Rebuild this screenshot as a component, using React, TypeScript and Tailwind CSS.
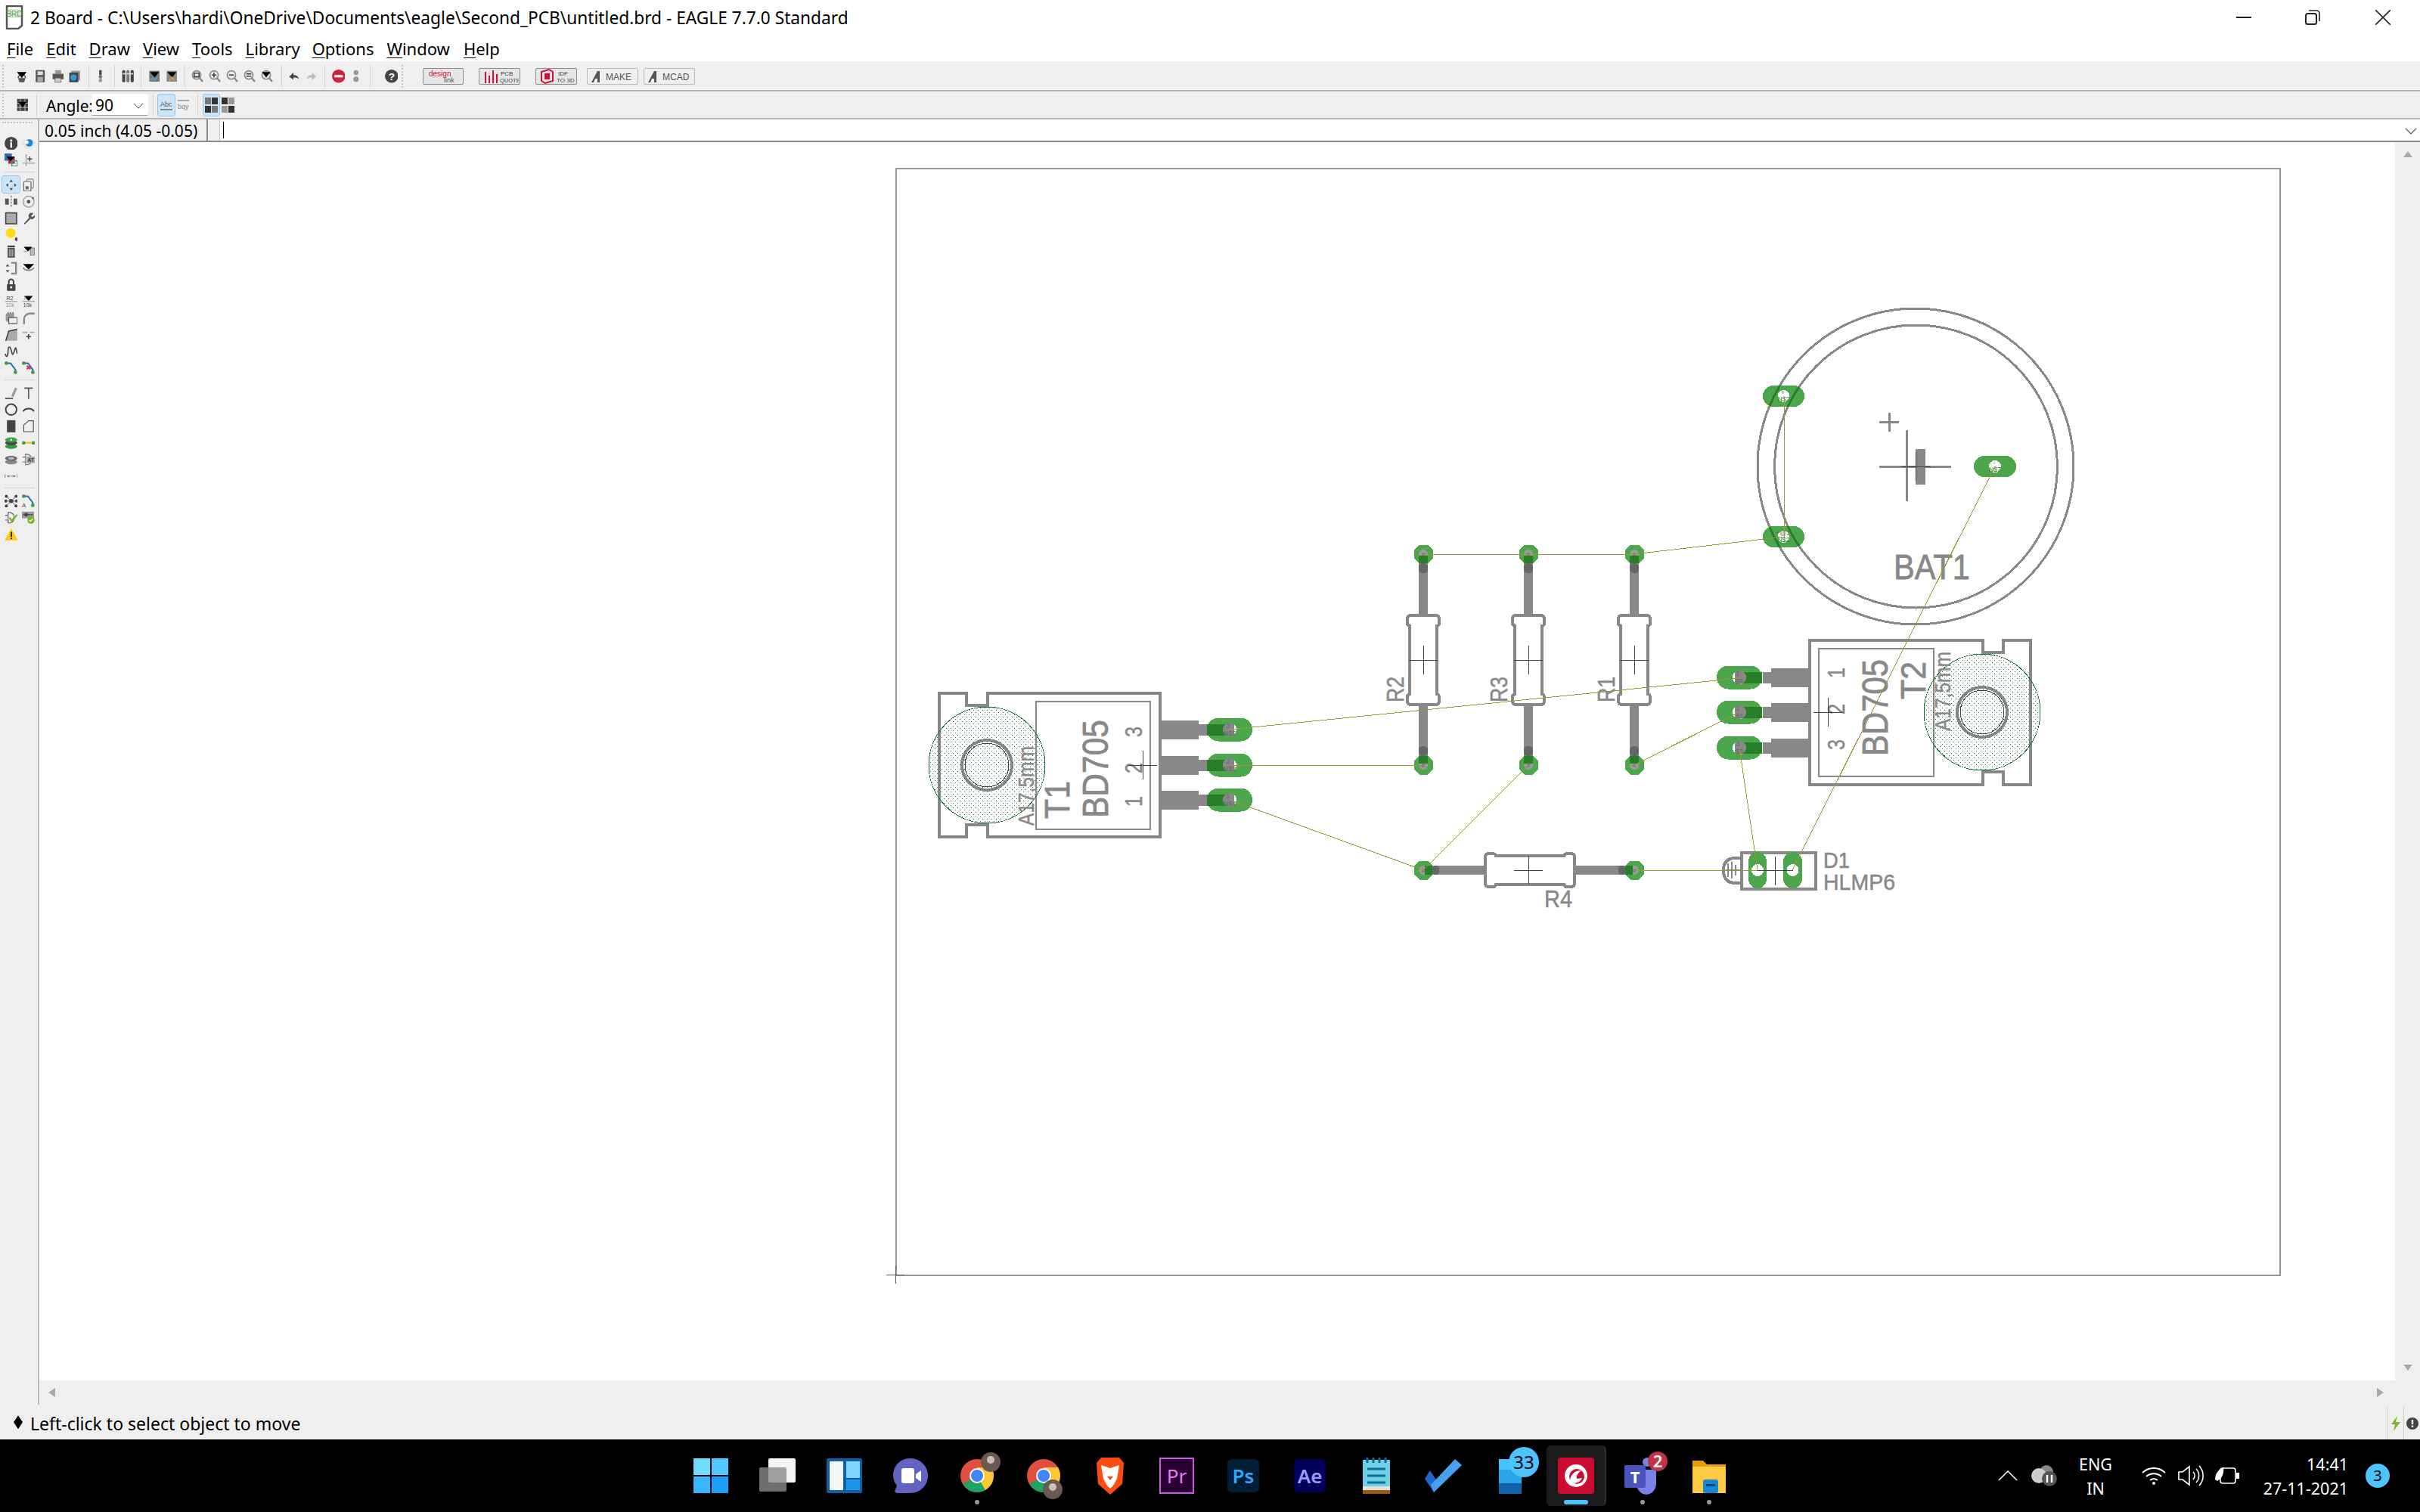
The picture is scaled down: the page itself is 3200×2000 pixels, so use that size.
import type { ReactNode } from "react";

const G = "#888888";
const WIRE = "#999933";
const PAD = "#4ca64c";
const OVER = "#278027";
const DARK = "#404040";

// ---------- small icon helpers ----------

function Ico({ w = 22, h = 22, children }: { w?: number; h?: number; children: ReactNode }) {
  return (
    <svg width={w * 0.8} height={h * 0.8} viewBox={`0 0 ${w} ${h}`} className="block">
      {children}
    </svg>
  );
}

const Drop = ({ x = 4, y = 6 }: { x?: number; y?: number }) => <path d={`M${x} ${y}h14l-7 8z`} fill="#000" />;

function Sep() {
  return <div className="h-[30px] w-px bg-[#d4d4d4]" />;
}

function Grip() {
  return <div className="h-[30px] w-[4px] border-l-2 border-dotted border-[#c4c4c4]" />;
}

function Magnify({ sign }: { sign: string }) {
  return (
    <Ico>
      <circle cx="10" cy="9" r="7" fill="#e8e8e8" stroke="#8a8a8a" strokeWidth="2" />
      <path d="M15 14l5 6" stroke="#8a8a8a" strokeWidth="3" />
      <path d={sign} stroke="#444" strokeWidth="2" fill="none" />
    </Ico>
  );
}

function ToolBtn({ className, children }: { className: string; children: ReactNode }) {
  return (
    <div className={`flex h-[22px] items-center justify-center rounded-[2px] border border-[#8a8a8a] bg-[#e6e6e6] ${className}`}>
      {children}
    </div>
  );
}

// ---------- top toolbars ----------

function MainToolbar() {
  return (
    <div className="flex h-[37px] items-center bg-[#efefef]">
      <div className="ml-[3px] w-[7px]"><Grip /></div>
      <div className="ml-[7px] flex w-[24px] justify-center">
        <Ico>
          <path d="M5 14h12l-2 7H7z" fill="#555" />
          <path d="M5 14a6 6 0 0 1 12 0" fill="none" stroke="#555" strokeWidth="2" />
          <path d="M3 4h16l-8 10z" fill="#000" />
        </Ico>
      </div>
      <div className="flex w-[24px] justify-center">
        <Ico>
          <rect x="4" y="1" width="15" height="20" rx="1" fill="#555" />
          <rect x="7" y="3" width="9" height="6" fill="#ddd" />
          <rect x="7" y="12" width="9" height="8" fill="#aaa" />
        </Ico>
      </div>
      <div className="flex w-[23px] justify-center">
        <Ico>
          <rect x="6" y="1" width="10" height="6" fill="#999" />
          <rect x="2" y="7" width="18" height="9" fill="#555" />
          <rect x="6" y="14" width="10" height="7" fill="#ccc" stroke="#666" />
        </Ico>
      </div>
      <div className="flex w-[22px] justify-center">
        <Ico>
          <rect x="5" y="2" width="15" height="16" fill="#999" />
          <rect x="2" y="5" width="15" height="16" fill="#444" />
          <circle cx="9" cy="13" r="5" fill="#2f9be0" />
        </Ico>
      </div>
      <div className="ml-[7px]"><Sep /></div>
      <div className="ml-[4px] flex w-[22px] justify-center">
        <Ico>
          <path d="M11 1v8" stroke="#444" strokeWidth="4" />
          <circle cx="11" cy="12" r="3" fill="#777" />
          <circle cx="11" cy="18" r="3" fill="#999" />
        </Ico>
      </div>
      <div className="ml-[7px]"><Sep /></div>
      <div className="ml-[6px] flex w-[22px] justify-center">
        <Ico>
          <rect x="2" y="1" width="5" height="20" rx="2" fill="#444" />
          <rect x="9" y="1" width="5" height="20" rx="2" fill="#777" />
          <rect x="16" y="1" width="5" height="20" rx="2" fill="#444" />
          <rect x="3" y="6" width="17" height="2" fill="#ddd" />
        </Ico>
      </div>
      <div className="ml-[6px]"><Sep /></div>
      <div className="ml-[5px] flex w-[23px] justify-center">
        <Ico>
          <rect x="3" y="2" width="17" height="18" fill="#777" />
          <path d="M4 4h15l-7 9z" fill="#000" />
          <path d="M5 18l4-4 3 3 4-4" stroke="#4da3dd" strokeWidth="2" fill="none" />
        </Ico>
      </div>
      <div className="flex w-[23px] justify-center">
        <Ico>
          <rect x="3" y="2" width="17" height="18" fill="#8a8a8a" />
          <path d="M4 4h15l-7 9z" fill="#000" />
          <path d="M7 19l5-6 4 5" stroke="#e09a2f" strokeWidth="2" fill="none" />
        </Ico>
      </div>
      <div className="ml-[6px]"><Sep /></div>
      <div className="ml-[4px] flex w-[23px] justify-center"><Magnify sign="M6 6h8v6H6z" /></div>
      <div className="flex w-[23px] justify-center"><Magnify sign="M6 9h8M10 5v8" /></div>
      <div className="flex w-[23px] justify-center"><Magnify sign="M6 9h8" /></div>
      <div className="flex w-[23px] justify-center"><Magnify sign="M6 7h8M6 11h8" /></div>
      <div className="flex w-[23px] justify-center">
        <Ico>
          <circle cx="10" cy="9" r="7" fill="#e8e8e8" stroke="#8a8a8a" strokeWidth="2" />
          <path d="M15 14l5 6" stroke="#8a8a8a" strokeWidth="3" />
          <path d="M3 4h14l-7 9z" fill="#000" />
        </Ico>
      </div>
      <div className="ml-[8px]"><Sep /></div>
      <div className="ml-[4px] flex w-[23px] justify-center">
        <Ico>
          <path d="M3 12l7-7v4c5 0 8 2 9 7-3-3-5-3-9-3v4z" fill="#444" />
        </Ico>
      </div>
      <div className="flex w-[24px] justify-center">
        <Ico>
          <path d="M19 12l-7-7v4c-5 0-8 2-9 7 3-3 5-3 9-3v4z" fill="#bdbdbd" />
        </Ico>
      </div>
      <div className="ml-[5px]"><Sep /></div>
      <div className="ml-[6px] flex w-[23px] justify-center">
        <Ico>
          <circle cx="11" cy="11" r="11" fill="#d21f3c" />
          <rect x="4" y="9" width="14" height="4" fill="#fff" />
        </Ico>
      </div>
      <div className="flex w-[23px] justify-center">
        <Ico>
          <circle cx="11" cy="5" r="4" fill="#999" />
          <circle cx="11" cy="16" r="4.5" fill="#999" />
        </Ico>
      </div>
      <div className="ml-[7px]"><Sep /></div>
      <div className="ml-[16px] flex w-[23px] justify-center">
        <Ico>
          <circle cx="11" cy="11" r="11" fill="#444" />
          <text x="11" y="17" textAnchor="middle" fontSize="17" fontWeight="700" fill="#fff" fontFamily="'Liberation Sans', sans-serif">?</text>
        </Ico>
      </div>
      <div className="ml-[2px] w-[5px]"><Grip /></div>
      <ToolBtn className="ml-[23px] w-[54px]">
        <svg width="50" height="20" viewBox="0 0 50 20">
          <text x="6" y="10" fontSize="10" fill="#d0103a" fontFamily="'Liberation Sans', sans-serif">design</text>
          <text x="26" y="18" fontSize="9" fill="#555" fontFamily="'Liberation Sans', sans-serif">link</text>
        </svg>
      </ToolBtn>
      <ToolBtn className="ml-[20px] w-[55px]">
        <svg width="50" height="20" viewBox="0 0 50 20">
          <path d="M6 19V4M11 19V9M16 19V2M21 19V7" stroke="#d0103a" strokeWidth="2" />
          <text x="26" y="9" fontSize="8" fill="#444" fontFamily="'Liberation Sans', sans-serif">PCB</text>
          <text x="25" y="18" fontSize="7.5" fill="#444" fontFamily="'Liberation Sans', sans-serif">QUOTE</text>
        </svg>
      </ToolBtn>
      <ToolBtn className="ml-[20px] w-[55px]">
        <svg width="50" height="20" viewBox="0 0 50 20">
          <path d="M5 4l10-3 5 3v12l-10 3-5-3z" fill="none" stroke="#d0103a" strokeWidth="2" />
          <rect x="9" y="6" width="7" height="8" fill="#d0103a" />
          <text x="27" y="9" fontSize="8" fill="#444" fontFamily="'Liberation Sans', sans-serif">IDF</text>
          <text x="25" y="18" fontSize="8" fill="#444" fontFamily="'Liberation Sans', sans-serif">TO 3D</text>
        </svg>
      </ToolBtn>
      <ToolBtn className="ml-[13px] w-[68px] border-[#bcbcbc] bg-[#efefef]">
        <svg width="60" height="20" viewBox="0 0 60 20">
          <path d="M2 18L10 3h3v15h-3v-5H7l-2 5z" fill="#555" />
          <text x="21" y="15" fontSize="12" fill="#555" fontFamily="'Liberation Sans', sans-serif">MAKE</text>
        </svg>
      </ToolBtn>
      <ToolBtn className="ml-[7px] w-[68px] border-[#bcbcbc] bg-[#efefef]">
        <svg width="60" height="20" viewBox="0 0 60 20">
          <path d="M2 18L10 3h3v15h-3v-5H7l-2 5z" fill="#555" />
          <text x="21" y="15" fontSize="12" fill="#555" fontFamily="'Liberation Sans', sans-serif">MCAD</text>
        </svg>
      </ToolBtn>
    </div>
  );
}

function AngleToolbar() {
  return (
    <div className="flex h-[35px] items-center bg-[#efefef]">
      <div className="ml-[3px] w-[7px]"><Grip /></div>
      <div className="ml-[9px] flex w-[22px] justify-center">
        <Ico>
          <rect x="2" y="1" width="18" height="20" fill="#444" />
          <path d="M7 1v20M15 1v20M2 8h18M2 15h18" stroke="#ddd" strokeWidth="1" />
          <path d="M4 6h14l-7 9z" fill="#000" />
        </Ico>
      </div>
      <div className="ml-[7px]"><Sep /></div>
      <span className="ml-[12px] w-[60px] pt-[3px] text-[21px] leading-none text-black">Angle:</span>
      <div className="flex h-[29px] w-[75px] items-center justify-between rounded-[2px] border-b border-[#9a9a9a] bg-white pl-[5px] pr-[6px] pt-[3px] text-[21px] leading-none text-black">
        <span>90</span>
        <svg width="14" height="10" viewBox="0 0 14 10"><path d="M1 2l6 6 6-6" stroke="#444" strokeWidth="1" fill="none" /></svg>
      </div>
      <div className="ml-[6px]"><Sep /></div>
      <div className="ml-[5px] flex h-[30px] w-[24px] items-center justify-center rounded-[3px] border border-[#90c8f6] bg-[#cce4f7]">
        <svg width="18" height="22" viewBox="0 0 18 22">
          <text x="1" y="13" fontSize="9" fill="#555" fontFamily="'Liberation Sans', sans-serif">Abc</text>
          <path d="M1 17h16" stroke="#888" strokeWidth="2" />
        </svg>
      </div>
      <div className="ml-[3px] flex w-[15px] justify-center">
        <svg width="15" height="22" viewBox="0 0 15 22">
          <path d="M0 5h15" stroke="#aaa" strokeWidth="2" />
          <text x="0" y="16" fontSize="9" fill="#888" fontFamily="'Liberation Sans', sans-serif">bqy</text>
        </svg>
      </div>
      <div className="ml-[11px]"><Sep /></div>
      <div className="ml-[6px] flex h-[30px] w-[23px] items-center justify-center rounded-[3px] border border-[#90c8f6] bg-[#cce4f7]">
        <svg width="19" height="22" viewBox="0 0 19 22">
          <rect x="1" y="1" width="8" height="9" fill="#777" />
          <rect x="10" y="1" width="8" height="9" fill="#333" />
          <rect x="1" y="12" width="8" height="9" fill="#333" />
          <rect x="10" y="12" width="8" height="9" fill="#777" />
        </svg>
      </div>
      <div className="ml-[1px] flex w-[19px] justify-center">
        <svg width="19" height="22" viewBox="0 0 19 22">
          <rect x="1" y="1" width="8" height="9" fill="#333" />
          <rect x="10" y="1" width="8" height="9" fill="#999" />
          <rect x="1" y="12" width="8" height="9" fill="#999" />
          <rect x="10" y="12" width="8" height="9" fill="#333" />
        </svg>
      </div>
    </div>
  );
}

// ---------- left tool palette ----------

function Cell({ active, children }: { active?: boolean; children?: ReactNode }) {
  return (
    <div className={`flex h-[22px] w-[23px] items-center justify-center rounded-[2px] ${active ? "bg-[#cce4f7] outline outline-[#90c8f6]" : ""}`}>
      {children}
    </div>
  );
}

const RouteIcon = ({ extra }: { extra?: ReactNode }) => (
  <Ico>
    <path d="M3 3h7l8 11v4" stroke="#2a6fb5" strokeWidth="2.5" fill="none" />
    <circle cx="3" cy="3" r="3" fill="#3aa040" />
    <circle cx="18" cy="18" r="3" fill="#3aa040" />
    {extra}
  </Ico>
);

const SmallLabel = ({ drop }: { drop?: boolean }) => (
  <Ico>
    <text x="3" y="9" fontSize="9" fill={drop ? "#999" : "#444"} fontFamily="'Liberation Sans', sans-serif">R2</text>
    <path d="M1 11h20" stroke="#777" />
    <text x="2" y="20" fontSize="9" fill={drop ? "#444" : "#999"} fontFamily="'Liberation Sans', sans-serif">10k</text>
    {drop && <Drop x={4} y={2} />}
  </Ico>
);

function LeftPalette() {
  return (
    <div className="flex w-[52px] shrink-0 flex-col border-r-2 border-[#bdbdbd] bg-[#efefef] pl-[3px]">
      <div className="mb-[15px] mt-[3px] h-[2px] w-[40px] border-t-2 border-dotted border-[#c4c4c4]" />
      <div className="grid w-[46px] grid-cols-2">
        <Cell>
          <Ico>
            <circle cx="11" cy="11" r="11" fill="#444" />
            <rect x="9.5" y="9" width="3" height="9" fill="#fff" />
            <circle cx="11" cy="6" r="2" fill="#fff" />
          </Ico>
        </Cell>
        <Cell>
          <Ico>
            <ellipse cx="11" cy="11" rx="11" ry="8" fill="#e4e4e4" />
            <circle cx="12" cy="10" r="6" fill="#1e88d8" />
            <circle cx="8" cy="9" r="3" fill="#fff" />
          </Ico>
        </Cell>
        <Cell>
          <Ico>
            <rect x="0" y="0" width="12" height="12" fill="#2a6fb5" />
            <rect x="6" y="6" width="11" height="11" fill="#c8265c" />
            <rect x="12" y="12" width="9" height="9" fill="none" stroke="#36a56a" strokeWidth="2" />
            <path d="M3 5h14l-7 8z" fill="#000" />
          </Ico>
        </Cell>
        <Cell>
          <Ico>
            <path d="M1 16h20M7 1v20" stroke="#aaa" strokeWidth="2" />
            <path d="M9 9h8M13 5v8" stroke="#555" strokeWidth="2" />
          </Ico>
        </Cell>
      </div>
      <div className="mx-[3px] my-[5px] h-px w-[40px] bg-[#d4d4d4]" />
      <div className="grid w-[46px] grid-cols-2">
        <Cell active>
          <Ico>
            <path d="M11 2l3 4H8zM11 20l3-4H8zM2 11l4 3V8zM20 11l-4 3V8z" fill="#555" />
          </Ico>
        </Cell>
        <Cell>
          <Ico>
            <rect x="8" y="1" width="11" height="15" rx="2" fill="#efefef" stroke="#888" strokeWidth="1.5" />
            <rect x="3" y="5" width="12" height="16" rx="2" fill="#efefef" stroke="#666" strokeWidth="1.5" />
            <rect x="6" y="13" width="5" height="5" fill="#666" />
          </Ico>
        </Cell>
        <Cell>
          <Ico>
            <path d="M11 1v20" stroke="#888" strokeDasharray="3 2" strokeWidth="2" />
            <path d="M1 6h6v10H1zM15 6h6v10h-6z" fill="#555" />
          </Ico>
        </Cell>
        <Cell>
          <Ico>
            <circle cx="11" cy="11" r="9" fill="none" stroke="#aaa" strokeWidth="2" />
            <circle cx="11" cy="11" r="3" fill="#555" />
            <path d="M16 3l4 1-1 4z" fill="#555" />
          </Ico>
        </Cell>
        <Cell>
          <Ico>
            <rect x="2" y="2" width="18" height="18" fill="#aaa" stroke="#444" strokeWidth="2" />
          </Ico>
        </Cell>
        <Cell>
          <Ico>
            <path d="M3 20l9-10a5 5 0 0 1 7-7l-4 4 2 2 4-3a5 5 0 0 1-7 6L5 21z" fill="#555" />
          </Ico>
        </Cell>
        <Cell>
          <Ico>
            <circle cx="10" cy="8" r="8" fill="#ffd91a" />
            <circle cx="20" cy="18" r="3" fill="#444" />
          </Ico>
        </Cell>
        <Cell />
        <Cell>
          <Ico>
            <rect x="5" y="1" width="12" height="3" fill="#444" />
            <path d="M5 5h12v16H5z" fill="#555" />
            <path d="M8.5 7v12M11 7v12M13.5 7v12" stroke="#ddd" />
          </Ico>
        </Cell>
        <Cell>
          <Ico>
            <path d="M3 11h5M14 5v12h7V5z" fill="#bbb" stroke="#666" />
            <Drop x={3} y={3} />
          </Ico>
        </Cell>
        <Cell>
          <Ico>
            <path d="M5 4l3 4H2zM5 18l3-4H2z" fill="#555" />
            <path d="M11 2h8v18h-8" fill="none" stroke="#888" strokeWidth="3" />
          </Ico>
        </Cell>
        <Cell>
          <Ico>
            <path d="M2 10a10 8 0 0 0 18 0" fill="none" stroke="#888" strokeWidth="2" />
            <path d="M2 4h18l-9 9z" fill="#000" />
          </Ico>
        </Cell>
        <Cell>
          <Ico>
            <path d="M7 10V6a4 4 0 0 1 8 0v4" fill="none" stroke="#444" strokeWidth="2.5" />
            <rect x="4" y="10" width="14" height="11" rx="1" fill="#444" />
            <circle cx="11" cy="15" r="2" fill="#efefef" />
          </Ico>
        </Cell>
        <Cell />
        <Cell><SmallLabel /></Cell>
        <Cell><SmallLabel drop /></Cell>
        <Cell>
          <Ico>
            <rect x="2" y="3" width="14" height="14" rx="2" fill="#999" />
            <path d="M6 1v3M10 1v3M14 1v3" stroke="#777" strokeWidth="2" />
            <rect x="7" y="10" width="14" height="10" fill="#efefef" stroke="#555" strokeWidth="1.5" />
          </Ico>
        </Cell>
        <Cell>
          <Ico>
            <path d="M2 21v-8a11 11 0 0 1 11-11h8v3h-8a8 8 0 0 0-8 8v8z" fill="#888" />
          </Ico>
        </Cell>
        <Cell>
          <Ico>
            <path d="M2 21L7 5l14-3v19z" fill="#aaa" />
            <path d="M2 21L7 5l14-3" fill="none" stroke="#444" strokeWidth="2" />
          </Ico>
        </Cell>
        <Cell>
          <Ico>
            <path d="M1 7h8M13 7h8" stroke="#aaa" strokeWidth="2" />
            <path d="M7 14h8M11 10v8" stroke="#444" strokeWidth="2" />
          </Ico>
        </Cell>
        <Cell>
          <Ico>
            <path d="M1 15c3 10 5 0 5-6s3-8 5 0 2 10 5 2 2-9 5 4" fill="none" stroke="#444" strokeWidth="2" />
          </Ico>
        </Cell>
        <Cell />
        <Cell><RouteIcon /></Cell>
        <Cell>
          <RouteIcon extra={<path d="M8 7l6 6M14 7l-6 6" stroke="#e0245e" strokeWidth="2.5" />} />
        </Cell>
      </div>
      <div className="mx-[3px] my-[5px] h-px w-[40px] bg-[#d4d4d4]" />
      <div className="grid w-[46px] grid-cols-2">
        <Cell>
          <Ico>
            <path d="M1 20h13" stroke="#444" strokeWidth="2" />
            <path d="M13 17l6-14" stroke="#999" strokeWidth="4" />
          </Ico>
        </Cell>
        <Cell>
          <Ico>
            <path d="M4 3h14M11 3v18" stroke="#555" strokeWidth="2" />
          </Ico>
        </Cell>
        <Cell>
          <Ico><circle cx="11" cy="11" r="9" fill="none" stroke="#444" strokeWidth="2.5" /></Ico>
        </Cell>
        <Cell>
          <Ico><path d="M2 14a10 8 0 0 1 18 0" fill="none" stroke="#444" strokeWidth="2.5" /></Ico>
        </Cell>
        <Cell>
          <Ico><rect x="4" y="1" width="14" height="20" fill="#444" /></Ico>
        </Cell>
        <Cell>
          <Ico><path d="M3 20V9l8-7h8v18z" fill="#efefef" stroke="#555" strokeWidth="1.5" /></Ico>
        </Cell>
        <Cell>
          <Ico>
            <ellipse cx="11" cy="17" rx="10" ry="4" fill="#2f9d3a" />
            <ellipse cx="11" cy="11" rx="10" ry="4" fill="#4a4a4a" />
            <ellipse cx="11" cy="6" rx="10" ry="4" fill="#39a845" />
            <circle cx="11" cy="6" r="1.5" fill="#fff" />
          </Ico>
        </Cell>
        <Cell>
          <Ico>
            <path d="M3 11h16" stroke="#f2c811" strokeWidth="3" />
            <circle cx="3" cy="11" r="3" fill="#3aa040" />
            <circle cx="19" cy="11" r="3" fill="#3aa040" />
          </Ico>
        </Cell>
        <Cell>
          <Ico>
            <ellipse cx="11" cy="15" rx="10" ry="4" fill="#888" />
            <ellipse cx="11" cy="9" rx="10" ry="4" fill="#666" />
            <ellipse cx="11" cy="9" rx="5" ry="2" fill="#bbb" />
          </Ico>
        </Cell>
        <Cell>
          <Ico>
            <path d="M1 7h5M1 15h5M6 2c7 0 10 4 10 9s-3 9-10 9z" fill="none" stroke="#777" strokeWidth="1.5" />
            <rect x="8" y="6" width="14" height="11" fill="#aaa" />
            <text x="9" y="15" fontSize="9" fontWeight="700" fill="#444" fontFamily="'Liberation Sans', sans-serif">AT</text>
          </Ico>
        </Cell>
        <Cell>
          <Ico>
            <path d="M1 8v6M21 8v6M4 11h14" stroke="#666" strokeWidth="1" />
            <path d="M4 11l3-2v4zM18 11l-3-2v4z" fill="#666" />
          </Ico>
        </Cell>
        <Cell />
      </div>
      <div className="mx-[3px] my-[5px] h-px w-[40px] bg-[#d4d4d4]" />
      <div className="grid w-[46px] grid-cols-2">
        <Cell>
          <Ico>
            <path d="M3 3l16 16M19 3L3 19M2 11h18" stroke="#444" strokeWidth="1" />
            <circle cx="11" cy="11" r="3.5" fill="#444" />
            <circle cx="3" cy="3" r="2.5" fill="#444" />
            <circle cx="19" cy="3" r="2.5" fill="#444" />
            <circle cx="3" cy="19" r="2.5" fill="#444" />
            <circle cx="19" cy="19" r="2.5" fill="#444" />
            <circle cx="2" cy="11" r="2.5" fill="#444" />
            <circle cx="20" cy="11" r="2.5" fill="#444" />
          </Ico>
        </Cell>
        <Cell>
          <RouteIcon extra={<text x="0" y="21" fontSize="10" fill="#444" fontFamily="'Liberation Sans', sans-serif">A</text>} />
        </Cell>
        <Cell>
          <Ico>
            <path d="M1 7h5M1 15h5M6 2c7 0 10 4 10 9s-3 9-10 9z" fill="none" stroke="#666" strokeWidth="1.5" />
            <path d="M8 11l4 5 9-10" stroke="#7ab62c" strokeWidth="3" fill="none" />
          </Ico>
        </Cell>
        <Cell>
          <Ico>
            <rect x="0" y="1" width="20" height="11" fill="#999" />
            <path d="M2 6h16" stroke="#444" strokeWidth="1.5" />
            <circle cx="7" cy="6" r="3" fill="#444" />
            <circle cx="15" cy="15" r="6" fill="#7ab62c" />
            <path d="M12 15l2 2 4-4" stroke="#fff" strokeWidth="1.5" fill="none" />
          </Ico>
        </Cell>
        <Cell>
          <Ico>
            <path d="M11 1l11 20H0z" fill="#ffc81e" />
            <rect x="10" y="7" width="2.5" height="8" fill="#333" />
            <rect x="10" y="16.5" width="2.5" height="2.5" fill="#333" />
          </Ico>
        </Cell>
        <Cell />
      </div>
    </div>
  );
}

// ---------- board drawing ----------

function Label({ x, y, size, len, rot, children }: { x: number; y: number; size: number; len: number; rot?: boolean; children: string }) {
  return (
    <text
      transform={`translate(${x} ${y})${rot ? " rotate(-90)" : ""}`}
      fontSize={size}
      textLength={len}
      lengthAdjust="spacingAndGlyphs"
      fill={G}
      stroke={G}
      strokeWidth={size / 60}
      fontFamily="'Liberation Sans', sans-serif"
    >
      {children}
    </text>
  );
}

function Origin({ x, y }: { x: number; y: number }) {
  return <path d={`M${x - 19} ${y}h38M${x} ${y - 19}v38`} stroke={DARK} strokeWidth="1" />;
}

function Wire({ d }: { d: string }) {
  return <path d={d} stroke={WIRE} strokeWidth="1" fill="none" />;
}

// pad with a leg coming in from the side; dir 1 = leg on the left of the hole
function LegPad({ x, y, dir, pin, net }: { x: number; y: number; dir: 1 | -1; pin: string; net: string }) {
  return (
    <g>
      <rect x={x - 30} y={y - 15.5} width="60" height="31" rx="15.5" fill={PAD} />
      <rect x={dir === 1 ? x - 30 : x} y={y - 7.5} width="30" height="15" fill={OVER} />
      <circle cx={x} cy={y} r="9" fill="#fff" />
      <path d={`M${x + dir * 6} ${y - 6.7}A9 9 0 1 ${dir === 1 ? 0 : 1} ${x + dir * 6} ${y + 6.7}Z`} fill={G} />
      <text x={x - 2} y={y - 2} fontSize="9" fill="#666" textAnchor="middle" fontFamily="'Liberation Sans', sans-serif">{pin}</text>
      <text x={x} y={y + 8} fontSize="9" fill="#666" textAnchor="middle" fontFamily="'Liberation Sans', sans-serif">{net}</text>
    </g>
  );
}

function RoundPad({ x, y, w, h, top, sub }: { x: number; y: number; w: number; h: number; top: string; sub: string }) {
  return (
    <g>
      <rect x={x - w / 2} y={y - h / 2} width={w} height={h} rx={Math.min(w, h) / 2} fill={PAD} />
      <circle cx={x} cy={y} r="8" fill="#fff" />
      <text x={x - 1} y={y - 2} fontSize="9" fill="#666" textAnchor="middle" fontFamily="'Liberation Sans', sans-serif">{top}</text>
      <text x={x} y={y + 7} fontSize="9" fill="#2c7a2c" textAnchor="middle" fontFamily="'Liberation Sans', sans-serif">{sub}</text>
    </g>
  );
}

function OctPad({ x, y }: { x: number; y: number }) {
  const a = 12.5;
  const b = 5.5;
  return (
    <g>
      <polygon
        points={`${x - b},${y - a} ${x + b},${y - a} ${x + a},${y - b} ${x + a},${y + b} ${x + b},${y + a} ${x - b},${y + a} ${x - a},${y + b} ${x - a},${y - b}`}
        fill={PAD}
      />
      <circle cx={x} cy={y} r="6" fill="#9a9a9a" />
      <text x={x} y={y + 3} fontSize="8" fill="#666" textAnchor="middle" fontFamily="'Liberation Sans', sans-serif">#</text>
    </g>
  );
}

function VResistor({ x }: { x: number }) {
  const top = 733;
  const bottom = 1012;
  return (
    <g>
      <OctPad x={x} y={top} />
      <OctPad x={x} y={bottom} />
      <rect x={x - 6} y={top + 2} width="12" height="10" fill={OVER} />
      <rect x={x - 6} y={bottom - 12} width="12" height="10" fill={OVER} />
      <rect x={x - 6} y={top + 12} width="12" height="70" fill={G} />
      <rect x={x - 6} y={bottom - 80} width="12" height="68" fill={G} />
      <rect x={x - 6} y={top + 12} width="12" height="13" rx="5" fill="#666" />
      <rect x={x - 6} y={bottom - 25} width="12" height="13" rx="5" fill="#666" />
      <path
        d={`M${x - 16} 814h32q5 0 5 5v4q0 5-3 5v90q3 0 3 5v4q0 5-5 5h-32q-5 0-5-5v-4q0-5 3-5v-90q-3 0-3-5v-4q0-5 5-5z`}
        fill="#fff"
        stroke={G}
        strokeWidth="4"
      />
      <Origin x={x} y={873} />
    </g>
  );
}

function Board() {
  return (
    <svg
      width="3115"
      height="1638"
      viewBox="52 188 3115 1638"
      shapeRendering="crispEdges"
      className="block"
    >
      <defs>
        <pattern id="hatch" width="6" height="6" patternUnits="userSpaceOnUse">
          <rect x="0" y="0" width="1" height="1" fill="#1f7a3a" />
          <rect x="3" y="3" width="1" height="1" fill="#1f7a3a" />
        </pattern>
        <clipPath id="batpads">
          <rect x="2331" y="510" width="55" height="28" rx="14" />
          <rect x="2331" y="696" width="55" height="28" rx="14" />
        </clipPath>
      </defs>

      {/* board outline */}
      <rect x="1184.5" y="222.5" width="1830" height="1464" fill="none" stroke="#969696" strokeWidth="2" />
      <path d="M1172 1686h24M1184 1674v24" stroke="#555" strokeWidth="1" />

      {/* T1 */}
      <path d="M1242 917H1278V933H1306V917H1534V1107H1306V1091H1278V1107H1242Z" fill="#fff" stroke={G} strokeWidth="4" />
      <rect x="1370" y="928" width="151" height="169" fill="none" stroke={G} strokeWidth="2" />
      <circle cx="1305" cy="1012" r="33" fill="none" stroke={G} strokeWidth="4" />
      <circle cx="1305" cy="1012" r="29" fill="none" stroke={DARK} strokeWidth="1" />
      <circle cx="1305" cy="1012" r="77" fill="url(#hatch)" stroke="#0f6f33" strokeWidth="1" />
      <Label x={1465} y={1082} size={49} len={130} rot>BD705</Label>
      <Label x={1414} y={1083} size={47} len={50} rot>T1</Label>
      <Label x={1367} y={1092} size={29} len={105} rot>A17,5mm</Label>
      <Label x={1510} y={975} size={31} len={14} rot>3</Label>
      <Label x={1510} y={1023} size={31} len={14} rot>2</Label>
      <Label x={1510} y={1067} size={31} len={14} rot>1</Label>
      <Origin x={1511} y={1012} />
      {[965, 1012, 1058].map((y) => (
        <g key={y}>
          <rect x="1534" y={y - 12.5} width="51" height="25" fill={G} />
          <rect x="1585" y={y - 7.5} width="11" height="15" fill={G} />
        </g>
      ))}
      <LegPad x={1626} y={965} dir={1} pin="3" net="N$5" />
      <LegPad x={1626} y={1012} dir={1} pin="2" net="N$3" />
      <LegPad x={1626} y={1058} dir={1} pin="1" net="N$4" />

      {/* T2 */}
      <path d="M2393 847H2622V863H2649V847H2685V1038H2649V1021H2622V1038H2393Z" fill="#fff" stroke={G} strokeWidth="4" />
      <rect x="2405" y="858" width="152" height="169" fill="none" stroke={G} strokeWidth="2" />
      <circle cx="2621" cy="942" r="33" fill="none" stroke={G} strokeWidth="4" />
      <circle cx="2621" cy="942" r="29" fill="none" stroke={DARK} strokeWidth="1" />
      <circle cx="2621" cy="942" r="77" fill="url(#hatch)" stroke="#0f6f33" strokeWidth="1" />
      <Label x={2496} y={1000} size={49} len={128} rot>BD705</Label>
      <Label x={2546} y={925} size={47} len={50} rot>T2</Label>
      <Label x={2579} y={967} size={29} len={105} rot>A17,5mm</Label>
      <Label x={2439} y={897} size={31} len={14} rot>1</Label>
      <Label x={2439} y={945} size={31} len={14} rot>2</Label>
      <Label x={2439} y={992} size={31} len={14} rot>3</Label>
      <Origin x={2417} y={942} />
      {[896, 942, 989].map((y) => (
        <g key={y}>
          <rect x="2342" y={y - 12.5} width="53" height="25" fill={G} />
          <rect x="2331" y={y - 7.5} width="11" height="15" fill={G} />
        </g>
      ))}
      <LegPad x={2300} y={896} dir={-1} pin="1" net="$5" />
      <LegPad x={2300} y={942} dir={-1} pin="2" net="$1" />
      <LegPad x={2300} y={989} dir={-1} pin="3" net="$6" />

      {/* resistors */}
      <VResistor x={1882} />
      <VResistor x={2021} />
      <VResistor x={2161} />
      <Label x={1856} y={929} size={32} len={34} rot>R2</Label>
      <Label x={1993} y={929} size={32} len={34} rot>R3</Label>
      <Label x={2135} y={929} size={32} len={34} rot>R1</Label>

      {/* R4 */}
      <OctPad x={1882} y={1151} />
      <OctPad x={2161} y={1151} />
      <rect x="1884" y="1145" width="10" height="12" fill={OVER} />
      <rect x="2149" y="1145" width="10" height="12" fill={OVER} />
      <rect x="1894" y="1145" width="70" height="12" fill={G} />
      <rect x="2080" y="1145" width="69" height="12" fill={G} />
      <rect x="1894" y="1145" width="9" height="12" rx="4" fill="#666" />
      <rect x="2140" y="1145" width="9" height="12" rx="4" fill="#666" />
      <path
        d="M1969 1129h4q5 0 5 3h90q0-3 5-3h4q5 0 5 5v34q0 5-5 5h-4q-5 0-5-3h-90q0 3-5 3h-4q-5 0-5-5v-34q0-5 5-5z"
        fill="#fff"
        stroke={G}
        strokeWidth="4"
      />
      <Origin x={2021} y={1151} />
      <Label x={2042} y={1200} size={32} len={37}>R4</Label>

      {/* D1 */}
      <rect x="2303" y="1128" width="98" height="48" fill="#fff" stroke={G} strokeWidth="4" />
      <path d="M2303 1135H2295Q2279 1135 2279 1151Q2279 1168 2295 1168H2303" fill="none" stroke={G} strokeWidth="4" />
      <path d="M2285 1142v18M2290 1140v22M2295 1144v14M2282 1151h20" stroke={G} strokeWidth="2" />
      <RoundPad x={2324} y={1151} w={24} h={48} top="" sub="" />
      <RoundPad x={2370.5} y={1151} w={25} h={48} top="" sub="" />
      <path d="M2324 1151h47M2347.5 1133v38" stroke={DARK} strokeWidth="1" />
      <Label x={2411} y={1148} size={30} len={35}>D1</Label>
      <Label x={2411} y={1177} size={30} len={95}>HLMP6</Label>

      {/* BAT1 */}
      <circle cx="2533" cy="617" r="209" fill="none" stroke={G} strokeWidth="3" />
      <circle cx="2533.5" cy="617" r="187" fill="none" stroke={G} strokeWidth="3" />
      <path d="M2485 558.5h26M2498 546v25M2485 617h48M2546 617h34M2521 569v94" stroke={G} strokeWidth="3" />
      <rect x="2533" y="594" width="13" height="47" fill={G} />
      <path d="M2514 617h39M2533 598v38" stroke={DARK} strokeWidth="1" />
      <RoundPad x={2358.5} y={524} w={55} h={28} top="+" sub="N$2" />
      <RoundPad x={2358.5} y={710} w={55} h={28} top="+@1" sub="N$2" />
      <RoundPad x={2638} y={617} w={56} h={28} top="-" sub="N$7" />
      <g clipPath="url(#batpads)">
        <circle cx="2533" cy="617" r="209" fill="none" stroke={OVER} strokeWidth="3" />
        <circle cx="2533.5" cy="617" r="187" fill="none" stroke={OVER} strokeWidth="3" />
      </g>
      <Label x={2504} y={766} size={46} len={101}>BAT1</Label>

      {/* air wires */}
      <Wire d="M2359 525V710L2161 733H1882" />
      <Wire d="M2638 617L2370 1151" />
      <Wire d="M1626 965L2300 897" />
      <Wire d="M1626 1012H1882" />
      <Wire d="M1626 1058L1882 1151L2021 1012" />
      <Wire d="M2161 1151H2324" />
      <Wire d="M2161 1012L2300 942" />
      <Wire d="M2300 989L2324 1151" />
    </svg>
  );
}

// ---------- taskbar ----------

function TaskIcon({ dot, children }: { dot?: boolean; children: ReactNode }) {
  return (
    <div className="relative flex h-[96px] w-[88px] shrink-0 items-center justify-center">
      <svg width="64" height="64" viewBox="0 0 64 64" className="block overflow-visible">{children}</svg>
      {dot && <div className="absolute bottom-[10px] left-1/2 h-[6px] w-[6px] -translate-x-1/2 rounded-full bg-[#9a9a9a]" />}
    </div>
  );
}

const Chrome = () => (
  <g>
    <circle cx="32" cy="32" r="22" fill="#e34f3f" />
    <path d="M32 32L13 43a22 22 0 0 0 30 8z" fill="#1ea362" />
    <path d="M32 32l11 19a22 22 0 0 0 8-30H32z" fill="#fcc934" />
    <circle cx="32" cy="32" r="10" fill="#fff" />
    <circle cx="32" cy="32" r="8" fill="#4285f4" />
  </g>
);

const Avatar = ({ x, y }: { x: number; y: number }) => (
  <g>
    <circle cx={x} cy={y} r="13" fill="#6a5a52" />
    <circle cx={x} cy={y - 3} r="5" fill="#c9c2bc" />
  </g>
);

function Taskbar() {
  return (
    <div className="flex h-[96px] items-stretch bg-black pl-[896px] text-white">
      <TaskIcon>
        <rect x="9" y="9" width="22" height="22" fill="#6fdcff" />
        <rect x="33" y="9" width="22" height="22" fill="#4fc8ff" />
        <rect x="9" y="33" width="22" height="22" fill="#3ab6ff" />
        <rect x="33" y="33" width="22" height="22" fill="#1ca0fb" />
      </TaskIcon>
      <TaskIcon>
        <rect x="20" y="9" width="36" height="32" rx="2" fill="#f4f4f4" />
        <rect x="8" y="21" width="36" height="32" rx="2" fill="#8a8a8a" fillOpacity="0.8" />
      </TaskIcon>
      <TaskIcon>
        <rect x="9" y="9" width="47" height="46" rx="2" fill="#0d5fa8" />
        <rect x="13" y="13" width="18" height="38" rx="1" fill="#f6f6f6" />
        <rect x="35" y="13" width="18" height="22" fill="#7fd6fa" />
        <rect x="35" y="37" width="18" height="14" fill="#1e96ea" />
      </TaskIcon>
      <TaskIcon>
        <path d="M32 9a22 22 0 0 1 0 46H14l-3-2 3-8a22 22 0 0 1 18-36z" fill="#6264c4" />
        <rect x="20" y="22" width="17" height="20" rx="3" fill="#fff" />
        <path d="M39 30l7-5v15l-7-5z" fill="#fff" />
      </TaskIcon>
      <TaskIcon dot>
        <Chrome />
        <Avatar x={50} y={14} />
      </TaskIcon>
      <TaskIcon>
        <Chrome />
        <Avatar x={44} y={50} />
      </TaskIcon>
      <TaskIcon>
        <path d="M20 8h24l6 7-2 28-16 14-16-14-2-28z" fill="#fb4c12" />
        <path d="M20 18l12 4 12-4-3 18-5 9-4 4-4-4-5-9z" fill="#fff" />
        <path d="M28 33h8l-4 5z" fill="#fb4c12" />
      </TaskIcon>
      <TaskIcon>
        <rect x="10" y="9" width="44" height="46" fill="#2a0034" stroke="#c75ee2" strokeWidth="2" />
        <text x="32" y="42" textAnchor="middle" fontSize="26" fill="#e77cf5" fontFamily="'Noto Sans', sans-serif">Pr</text>
      </TaskIcon>
      <TaskIcon>
        <rect x="11" y="10" width="42" height="44" rx="6" fill="#001e36" />
        <text x="32" y="42" textAnchor="middle" fontSize="26" fontWeight="600" fill="#31a8ff" fontFamily="'Noto Sans', sans-serif">Ps</text>
      </TaskIcon>
      <TaskIcon>
        <rect x="11" y="10" width="42" height="44" rx="6" fill="#00005b" />
        <text x="32" y="42" textAnchor="middle" fontSize="26" fontWeight="600" fill="#9999ff" fontFamily="'Noto Sans', sans-serif">Ae</text>
      </TaskIcon>
      <TaskIcon>
        <rect x="14" y="11" width="36" height="40" fill="#6fcfe8" />
        <rect x="14" y="46" width="36" height="5" fill="#e4e0d8" />
        <rect x="14" y="51" width="36" height="5" fill="#9a5a16" />
        <path d="M20 8v7M28 8v7M36 8v7M44 8v7" stroke="#0d6f8f" strokeWidth="3" />
        <path d="M20 23h24M20 32h24M20 41h24" stroke="#0d6f8f" strokeWidth="3" />
      </TaskIcon>
      <TaskIcon>
        <path d="M8 36l7-11 9 14-4 15z" fill="#1e66c8" />
        <path d="M20 54l-4-10L48 10l9 8z" fill="#4aa0ee" />
      </TaskIcon>
      <TaskIcon>
        <rect x="18" y="10" width="30" height="46" fill="#2aa3e8" />
        <rect x="18" y="10" width="30" height="14" fill="#44c4fa" />
        <rect x="18" y="42" width="30" height="14" fill="#1062ad" />
        <circle cx="51" cy="14" r="20" fill="#4cc2ff" />
        <text x="51" y="23" textAnchor="middle" fontSize="24" fill="#000" fontFamily="'Noto Sans', sans-serif">33</text>
      </TaskIcon>
      <div className="relative flex h-[96px] w-[88px] shrink-0 items-center justify-center">
        <div className="absolute bottom-[8px] left-[5px] top-[8px] w-[79px] rounded-[6px] border-r-[3px] border-[#2a2a2a] bg-[#1c1c1c]" />
        <svg width="64" height="64" viewBox="0 0 64 64" className="relative block">
          <rect x="8" y="8" width="48" height="48" rx="4" fill="#cd0a2f" />
          <circle cx="32" cy="32" r="15" fill="#fff" />
          <circle cx="33" cy="33" r="10" fill="#cd0a2f" />
          <path d="M24 40c0-9 6-15 15-15-4 3-7 7-6 11l7-1c-2 6-10 9-16 5z" fill="#fff" />
        </svg>
        <div className="absolute bottom-[10px] left-1/2 h-[6px] w-[32px] -translate-x-1/2 rounded-full bg-[#4cc2ff]" />
      </div>
      <TaskIcon dot>
        <circle cx="38" cy="14" r="6" fill="#7b83eb" />
        <path d="M24 24h26v18a13 15 0 0 1-26 0z" fill="#7b83eb" />
        <rect x="8" y="18" width="28" height="30" rx="2" fill="#4b53bc" />
        <text x="22" y="42" textAnchor="middle" fontSize="22" fontWeight="700" fill="#fff" fontFamily="'Noto Sans', sans-serif">T</text>
        <circle cx="52" cy="13" r="13" fill="#c4314b" />
        <text x="52" y="21" textAnchor="middle" fontSize="22" fontWeight="600" fill="#fff" fontFamily="'Noto Sans', sans-serif">2</text>
      </TaskIcon>
      <TaskIcon dot>
        <path d="M10 12h14l5 5h25v38H10z" fill="#e39e0c" />
        <rect x="10" y="20" width="44" height="35" rx="1" fill="#ffcb45" />
        <rect x="24" y="37" width="20" height="18" rx="3" fill="#1a86d0" />
        <rect x="28" y="43" width="12" height="3" fill="#0b4a78" />
      </TaskIcon>

      {/* tray */}
      <div className="ml-auto flex items-center">
        <svg width="26" height="14" viewBox="0 0 26 14"><path d="M1 13L13 1l12 12" stroke="#fff" strokeWidth="1.5" fill="none" /></svg>
        <svg width="34" height="28" viewBox="0 0 34 28" className="ml-[18px]">
          <circle cx="20" cy="9" r="9" fill="#888" />
          <circle cx="10" cy="14" r="10" fill="#ccc" />
          <circle cx="24" cy="18" r="10" fill="#555" />
          <path d="M21 13v10M27 13v10" stroke="#fff" strokeWidth="2.5" />
        </svg>
        <div className="ml-[28px] flex w-[46px] flex-col items-center pt-[2px] text-[21.5px] leading-[32px]">
          <span>ENG</span>
          <span>IN</span>
        </div>
        <svg width="32" height="24" viewBox="0 0 32 24" className="ml-[38px]">
          <path d="M1 8a22 22 0 0 1 30 0M6 13a15 15 0 0 1 20 0M11 18a8 8 0 0 1 10 0" stroke="#fff" strokeWidth="2" fill="none" />
          <circle cx="16" cy="22" r="2" fill="#fff" />
        </svg>
        <svg width="34" height="28" viewBox="0 0 34 28" className="ml-[16px]">
          <path d="M1 9h5l9-7v24l-9-7H1z" stroke="#fff" strokeWidth="1.6" fill="none" />
          <path d="M20 9a7 7 0 0 1 0 10M24 5a13 13 0 0 1 0 18M28 1a19 19 0 0 1 0 26" stroke="#fff" strokeWidth="1.6" fill="none" />
        </svg>
        <svg width="34" height="26" viewBox="0 0 34 26" className="ml-[14px]">
          <rect x="8" y="3" width="20" height="20" rx="3" stroke="#fff" strokeWidth="1.6" fill="none" />
          <rect x="29" y="9" width="4" height="8" fill="#fff" />
          <path d="M1 18c0-9 6-14 11-16 1 7-1 14-8 18z" fill="#fff" />
        </svg>
        <div className="ml-[32px] flex w-[111px] flex-col items-end whitespace-nowrap pt-[2px] text-[21.5px] leading-[32px]">
          <span>14:41</span>
          <span>27-11-2021</span>
        </div>
        <div className="ml-[23px] mr-[40px] flex h-[32px] w-[32px] items-center justify-center rounded-full bg-[#4cc2ff] text-[20px] leading-none text-black">
          3
        </div>
      </div>
    </div>
  );
}

// ---------- page ----------

function MenuItem({ first, rest, className }: { first: string; rest: string; className?: string }) {
  return (
    <span className={className}>
      <span className="underline decoration-1 underline-offset-[3px]">{first}</span>
      {rest}
    </span>
  );
}

export default function App() {
  return (
    <div className="flex h-[2000px] w-[3200px] flex-col overflow-hidden bg-white font-['Noto_Sans',sans-serif] text-black">
      {/* title bar */}
      <div className="flex h-[46px] items-center">
        <svg width="26" height="32" viewBox="0 0 26 32" className="ml-[6px] block">
          <path d="M3 1h20v26l-5 4H3z" fill="#fff" stroke="#555" strokeWidth="2.5" />
          <rect x="4" y="5" width="18" height="12" fill="#dfe8d8" />
          <text x="13" y="15" textAnchor="middle" fontSize="10" fill="#4caf3a" fontFamily="'Liberation Sans', sans-serif">BRD</text>
        </svg>
        <span className="ml-[8px] pt-[2px] text-[22.7px] leading-[32px]">
          2 Board - C:\Users\hardi\OneDrive\Documents\eagle\Second_PCB\untitled.brd - EAGLE 7.7.0 Standard
        </span>
        <div className="ml-auto flex items-center">
          <svg width="20" height="20" viewBox="0 0 20 20" className="block"><path d="M0 10h20" stroke="#222" strokeWidth="2" /></svg>
          <svg width="20" height="20" viewBox="0 0 20 20" className="ml-[71px] block">
            <rect x="1" y="5" width="14" height="14" rx="2.5" fill="none" stroke="#222" strokeWidth="2" />
            <path d="M5 1h10a4 4 0 0 1 4 4v10" fill="none" stroke="#222" strokeWidth="1.6" />
          </svg>
          <svg width="20" height="20" viewBox="0 0 20 20" className="ml-[73px] mr-[39px] block"><path d="M0 0l20 20M20 0L0 20" stroke="#222" strokeWidth="1.6" /></svg>
        </div>
      </div>
      {/* menu */}
      <div className="flex h-[37px] items-center border-b border-[#f4f4f4] pl-[9px] text-[22px] leading-[32px]">
        <MenuItem first="F" rest="ile" />
        <MenuItem className="ml-[17px]" first="E" rest="dit" />
        <MenuItem className="ml-[17px]" first="D" rest="raw" />
        <MenuItem className="ml-[17px]" first="V" rest="iew" />
        <MenuItem className="ml-[17px]" first="T" rest="ools" />
        <MenuItem className="ml-[17px]" first="L" rest="ibrary" />
        <MenuItem className="ml-[16px]" first="O" rest="ptions" />
        <MenuItem className="ml-[17px]" first="W" rest="indow" />
        <MenuItem className="ml-[18px]" first="H" rest="elp" />
      </div>
      <div className="border-b-2 border-[#b4b4b4]"><MainToolbar /></div>
      <div className="border-b-2 border-[#b4b4b4]"><AngleToolbar /></div>

      {/* work area */}
      <div className="flex h-[1700px]">
        <LeftPalette />
        <div className="flex min-w-0 flex-1 flex-col">
          <div className="flex h-[30px] border-b-2 border-[#8c8c8c] bg-[#efefef]">
            <div className="flex w-[223px] items-center border-r-2 border-[#8c8c8c] pl-[7px] pt-[2px] text-[21px] leading-none">
              0.05 inch (4.05 -0.05)
            </div>
            <div className="w-[16px] border-r border-[#cfcfcf]" />
            <div className="relative flex-1 bg-white">
              <div className="absolute left-[4px] top-[3px] h-[22px] w-px bg-black" />
              <svg width="16" height="10" viewBox="0 0 16 10" className="absolute right-[4px] top-[11px]">
                <path d="M1 1l7 7 7-7" stroke="#555" strokeWidth="1.2" fill="none" />
              </svg>
            </div>
          </div>
          <div className="flex min-h-0 flex-1">
            <div className="min-w-0 flex-1 bg-white"><Board /></div>
            <div className="flex w-[33px] flex-col items-center justify-between bg-[#efefef] pb-[13px] pt-[12px]">
              <svg width="12" height="8" viewBox="0 0 12 8"><path d="M6 0l6 8H0z" fill="#a8a8a8" /></svg>
              <svg width="12" height="8" viewBox="0 0 12 8"><path d="M6 8L0 0h12z" fill="#a8a8a8" /></svg>
            </div>
          </div>
          <div className="flex h-[32px] items-center justify-between bg-[#efefef] pl-[12px] pr-[48px]">
            <svg width="9" height="12" viewBox="0 0 9 12"><path d="M0 6l9-6v12z" fill="#a8a8a8" /></svg>
            <svg width="9" height="12" viewBox="0 0 9 12"><path d="M9 6L0 0v12z" fill="#a8a8a8" /></svg>
          </div>
        </div>
      </div>

      {/* status bar */}
      <div className="flex h-[46px] items-center bg-[#efefef] pl-[18px] text-[23px] leading-[32px]">
        <span className="h-[18px] w-[12px] bg-black [clip-path:polygon(50%_0,100%_50%,50%_100%,0_50%)]" />
        <span className="ml-[10px] pt-[3px]">Left-click to select object to move</span>
        <div className="ml-auto flex h-[43px] self-end">
          <div className="flex w-[22px] items-center justify-center border-l border-[#cfcfcf]">
            <svg width="12" height="20" viewBox="0 0 12 20"><path d="M8 0L0 11h5l-2 9 9-12H6z" fill="#7ab62c" /></svg>
          </div>
          <div className="flex w-[22px] items-center justify-center border-l border-[#cfcfcf]">
            <svg width="16" height="16" viewBox="0 0 16 16">
              <circle cx="8" cy="8" r="8" fill="#444" />
              <rect x="6.8" y="3" width="2.4" height="6" fill="#fff" />
              <rect x="6.8" y="10.5" width="2.4" height="2.4" fill="#fff" />
            </svg>
          </div>
        </div>
      </div>

      <Taskbar />
    </div>
  );
}
